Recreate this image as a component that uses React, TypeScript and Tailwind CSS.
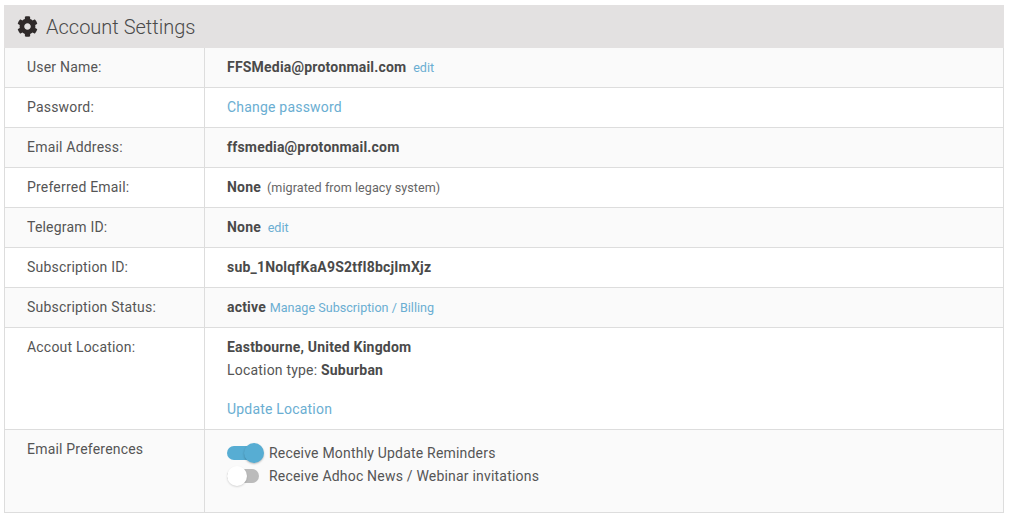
import { FaCog } from "react-icons/fa";

function Row({ label, odd, children, className }: { label: string; odd?: boolean; children: React.ReactNode; className?: string }) {
  return (
    <div className={`flex border-b border-[#dddddd] ${odd ? "bg-[#fafafa]" : "bg-white"} ${className ?? ""}`}>
      <div className="w-[200px] shrink-0 border-r border-[#dddddd] pl-[22px] pt-[9px]">{label}</div>
      <div className="flex-1 pl-[22px] pt-[9px]">{children}</div>
    </div>
  );
}

function Link({ children, small }: { children: React.ReactNode; small?: boolean }) {
  return <a className={`text-[#6aaed2] ${small ? "text-[12.6px] tracking-normal" : ""}`}>{children}</a>;
}

function Bold({ children }: { children: React.ReactNode }) {
  return <b className="font-bold text-[#4a4a4a]">{children}</b>;
}

export default function App() {
  return (
    <div className="bg-white min-h-[519px] pl-1 pr-2 pt-[5px] font-['Roboto',sans-serif] text-[14px] leading-[20px] tracking-[0.2px] text-[#555555]">
      <div className="flex h-[43px] items-center gap-[8px] bg-[#e3e1e1] pl-[13px] text-[20px] text-[#4a4a4a]">
        <FaCog className="h-[21px] w-[21px] text-[#2f2a2a]" />
        <span className="font-light tracking-normal">Account Settings</span>
      </div>
      <div className="border-x border-[#dddddd]">
        <Row label="User Name:" odd className="h-10">
          <Bold>FFSMedia@protonmail.com</Bold> <span className="ml-[3px]"><Link small>edit</Link></span>
        </Row>
        <Row label="Password:" className="h-10">
          <Link>Change password</Link>
        </Row>
        <Row label="Email Address:" odd className="h-10">
          <Bold>ffsmedia@protonmail.com</Bold>
        </Row>
        <Row label="Preferred Email:" className="h-10">
          <Bold>None</Bold>
          <span className="ml-[6px] text-[12.6px] tracking-[0.05px] text-[#666666]">(migrated from legacy system)</span>
        </Row>
        <Row label="Telegram ID:" odd className="h-10">
          <Bold>None</Bold> <span className="ml-[3px]"><Link small>edit</Link></span>
        </Row>
        <Row label="Subscription ID:" className="h-10">
          <Bold>sub_1NolqfKaA9S2tfI8bcjImXjz</Bold>
        </Row>
        <Row label="Subscription Status:" odd className="h-10">
          <Bold>active</Bold> <Link small>Manage Subscription / Billing</Link>
        </Row>
        <Row label="Accout Location:" className="h-[102px]">
          <div>
            <Bold>Eastbourne, United Kingdom</Bold>
          </div>
          <div className="mt-[3px]">
            Location type: <Bold>Suburban</Bold>
          </div>
          <div className="mt-[19px]">
            <Link>Update Location</Link>
          </div>
        </Row>
        <Row label="Email Preferences" odd className="h-[83px]">
          <div className="mt-[2px] flex h-[23px] items-center gap-[9px]">
            <div className="relative h-[14px] w-[33px] shrink-0 rounded-full bg-[#57add3]">
              <div className="absolute -right-1 -top-[3px] h-5 w-5 rounded-full bg-[#57add3] shadow-[0_1px_2px_rgba(0,0,0,0.25)]" />
            </div>
            <span>Receive Monthly Update Reminders</span>
          </div>
          <div className="flex h-[23px] items-center gap-[10px]">
            <div className="relative h-[14px] w-[32px] shrink-0 rounded-full bg-[#bbbbbb]">
              <div className="absolute left-0 -top-[3px] h-5 w-5 rounded-full bg-white shadow-[0_1px_2px_rgba(0,0,0,0.15)]" />
            </div>
            <span>Receive Adhoc News / Webinar invitations</span>
          </div>
        </Row>
      </div>
    </div>
  );
}
